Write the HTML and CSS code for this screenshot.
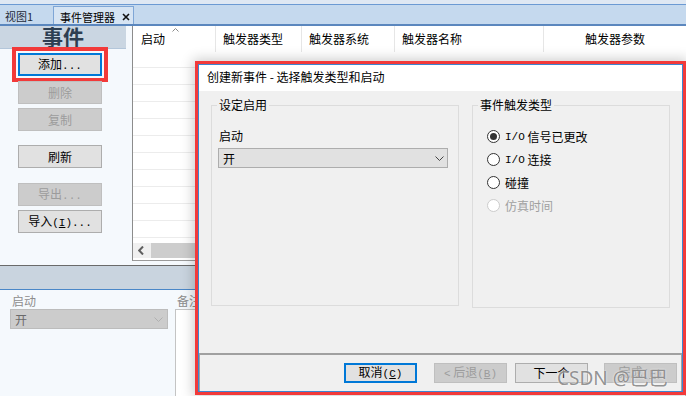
FILE: index.html
```html
<!DOCTYPE html>
<html lang="zh-CN">
<head>
  <meta charset="UTF-8">
  <title>事件管理器</title>
  <link rel="stylesheet" href="styles.css">
</head>
<body>
  <!-- Tab strip -->
  <div class="tabs">
    <div class="tab">视图1</div>
    <div class="tab active">事件管理器<svg class="tab-close" width="8" height="8" viewBox="0 0 8 8"><path d="M1 1L7 7M7 1L1 7" stroke="#111" stroke-width="1.6"/></svg></div>
  </div>

  <!-- Event list -->
  <div class="main">
    <div class="side">
      <div class="side-title">事件</div>
      <div class="side-btns">
        <button class="btn focus marked">添加<span class="m">...</span></button>
        <button class="btn" disabled>删除</button>
        <button class="btn" disabled>复制</button>
        <button class="btn refresh">刷新</button>
        <button class="btn export" disabled>导出<span class="m">...</span></button>
        <button class="btn">导入<span class="m">(<u>I</u>)...</span></button>
      </div>
    </div>
    <div class="grid">
      <div class="grid-head">
        <div class="col c1">启动<svg class="sort" width="7" height="4" viewBox="0 0 7 4"><path d="M0.5 3.5L3.5 0.5L6.5 3.5" fill="none" stroke="#8a8a8a"/></svg></div>
        <div class="col c2">触发器类型</div>
        <div class="col c3">触发器系统</div>
        <div class="col c4">触发器名称</div>
        <div class="col c5">触发器参数</div>
      </div>
      <div class="grid-body">
        <div class="row"></div><div class="row"></div><div class="row"></div><div class="row"></div>
        <div class="row"></div><div class="row"></div><div class="row"></div><div class="row"></div>
        <div class="row"></div><div class="row"></div><div class="row"></div><div class="row"></div>
      </div>
      <div class="hscroll">
        <div class="hs-btn"><svg width="6" height="9" viewBox="0 0 6 9"><path d="M5 0.5L1.2 4.5L5 8.5" fill="none" stroke="#606060" stroke-width="2"/></svg></div>
        <div class="hs-thumb"></div>
      </div>
    </div>
  </div>

  <!-- Properties -->
  <div class="props">
    <div class="props-band"></div>
    <div class="props-body">
      <div class="field start">
        <div class="lbl">启动</div>
        <div class="select off">开<svg width="9" height="5" viewBox="0 0 9 5"><path d="M0.5 0.5L4.5 4.5L8.5 0.5" fill="none" stroke="#b0b0b0"/></svg></div>
      </div>
      <div class="field memo-field">
        <div class="lbl">备注</div>
        <div class="memo"></div>
      </div>
    </div>
  </div>

  <!-- Wizard dialog (marked in red) -->
  <div class="dlg-mark">
    <div class="dlg">
      <div class="dlg-title">创建新事件 - 选择触发类型和启动</div>
      <div class="dlg-body">
        <fieldset class="group g1">
          <legend>设定启用</legend>
          <div class="g-lbl">启动</div>
          <div class="select">开<svg width="9" height="5" viewBox="0 0 9 5"><path d="M0.5 0.5L4.5 4.5L8.5 0.5" fill="none" stroke="#444"/></svg></div>
        </fieldset>
        <fieldset class="group g2">
          <legend>事件触发类型</legend>
          <div class="radios">
            <div class="radio-row"><span class="radio on"></span><span class="m">I/O</span>&nbsp;信号已更改</div>
            <div class="radio-row"><span class="radio"></span><span class="m">I/O</span>&nbsp;连接</div>
            <div class="radio-row"><span class="radio"></span>碰撞</div>
            <div class="radio-row disabled"><span class="radio"></span>仿真时间</div>
          </div>
        </fieldset>
      </div>
      <div class="dlg-foot">
        <button class="btn dbtn focus cancel">取消<span class="m">(<u>C</u>)</span></button>
        <button class="btn dbtn back" disabled><span class="m">&lt;</span> 后退<span class="m">(<u>B</u>)</span></button>
        <button class="btn dbtn next">下一个</button>
        <button class="btn dbtn" disabled>完成<span class="m">(<u>F</u>)</span></button>
      </div>
    </div>
  </div>

  <div class="watermark">CSDN @巴巴</div>
</body>
</html>
```

FILE: styles.css
```css
body { margin: 0; width: 686px; height: 396px; overflow: hidden; position: relative; font: 12px "Noto Sans CJK SC", sans-serif; color: #000; background: #f5f9fd; }
.m { font-family: "Liberation Mono", monospace; font-size: 11px; }

/* tabs */
.tabs { height: 26px; box-sizing: border-box; padding-top: 6px; display: flex; font-size: 11px; background: linear-gradient(#dfe8f3 0 4px, #6c9ad3 4px 5px, #c5d9ee 5px); border-bottom: 2px solid #5b87be; }
.tab { width: 53px; box-sizing: border-box; padding: 3px 0 0 5px; line-height: 14px; color: #1e2a38; white-space: nowrap; }
.tab.active { width: auto; display: flex; align-items: flex-start; padding: 3px 3px 0 6px; background: #d6e4f3; border: 1px solid #7fa6d6; border-bottom: none; color: #000; }
.tab-close { margin: 3px 0 0 7px; }

/* main area */
.main { display: flex; height: 240px; box-sizing: border-box; border-bottom: 1px solid #6a6a6a; }
.side { width: 132px; flex: none; }
.side-title { height: 22px; margin-right: 6px; line-height: 20px; text-align: center; font-size: 21px; font-weight: bold; color: #2e3f52; background: #cad6e2; border-bottom: 1px solid #b3c6da; }
.side-btns { display: flex; flex-direction: column; gap: 4px; padding: 4px 0 0 18px; }
.btn { font: inherit; width: 84px; height: 23px; padding: 0; background: #e1e1e1; border: 1px solid #adadad; color: #000; line-height: 18px; }
.btn:disabled { background: #cccccc; border-color: #bfbfbf; color: #9c9c9c; }
.btn.focus { border: 2px solid #0078d7; }
.btn.marked { outline: 4px solid #f23a3a; outline-offset: 2px; margin-bottom: 1px; }
.btn.refresh { margin-top: 10px; }
.btn.export { margin-top: 11px; }

/* grid */
.grid { flex: 1; min-width: 0; display: flex; flex-direction: column; background: #fff; border-left: 1px solid #8c8c8c; border-bottom: 1px solid #9a9a9a; margin-bottom: 4px; }
.grid-head { height: 25px; flex: none; display: flex; }
.col { position: relative; box-sizing: border-box; padding: 5px 0 0 7px; line-height: 16px; white-space: nowrap; border-right: 1px solid #e6e6e6; height: 26px; }
.c1 { width: 83px; padding-left: 8px; }
.c2 { width: 86px; }
.c3 { width: 93px; }
.c4 { width: 149px; }
.c5 { flex: 1; border-right: none; text-align: center; padding-left: 0; }
.sort { position: absolute; left: 39px; top: 2px; }
.grid-body { flex: 1; overflow: hidden; }
.row { height: 17px; box-sizing: border-box; border-bottom: 1px solid #ececec; }
.hscroll { height: 15px; margin-bottom: 2px; flex: none; display: flex; background: #f0f0f0; }
.hs-btn { width: 18px; display: flex; align-items: center; justify-content: center; padding-right: 2px; box-sizing: border-box; }
.hs-thumb { flex: 1; background: #cdcdcd; }

/* properties */
.props { height: 130px; }
.props-band { height: 23px; background: #c9d4df; border-bottom: 1px solid #4a87c8; }
.props-body { display: flex; gap: 7px; padding: 2px 0 0 10px; }
.lbl { line-height: 17px; color: #8d8d8d; padding-left: 2px; }
.field.start { width: 158px; }
.select { height: 20px; box-sizing: border-box; display: flex; align-items: center; justify-content: space-between; padding: 0 4px 0 4px; background: #e1e1e1; border: 1px solid #adadad; }
.select.off { background: #cccccc; border-color: #bcbcbc; color: #6a6a6a; }
.memo-field { flex: 1; }
.memo { height: 90px; background: #fff; border: 1px solid #c4c4c4; }

/* dialog */
.dlg-mark { position: absolute; left: 195px; top: 61px; width: 491px; height: 334px; box-sizing: border-box; border: 3px solid #f23a3a; box-shadow: 0 0 12px 2px rgba(0,0,0,0.2); }
.dlg { height: 100%; box-sizing: border-box; display: flex; flex-direction: column; background: #f0f0f0; border: 1px solid #3d85d0; }
.dlg-title { height: 26px; flex: none; background: #fff; padding-left: 8px; line-height: 24px; }
.dlg-body { flex: 1; display: grid; grid-template-columns: 248px 198px; column-gap: 13px; align-items: start; padding: 6px 11px 0 12px; }
.group { margin: 0; padding: 0; min-width: 0; border: 1px solid #dcdcdc; box-sizing: border-box; }
.group legend { padding: 0 2px; margin-left: 5px; line-height: 16px; }
.g1 { height: 209px; }
.g2 { height: 211px; }
.g-lbl { margin: 15px 0 0 7px; line-height: 16px; }
.g1 .select { margin: 4px 10px 0 6px; padding-right: 3px; }
.radios { margin: 12px 0 0 14px; }
.radio-row { display: flex; align-items: center; height: 23px; }
.radio { width: 13px; height: 13px; box-sizing: border-box; border: 1px solid #333; border-radius: 50%; background: #fff; margin-right: 5px; display: flex; align-items: center; justify-content: center; }
.radio.on::after { content: ""; width: 7px; height: 7px; border-radius: 50%; background: #333; }
.radio-row.disabled { color: #a0a0a0; }
.radio-row.disabled .radio { border-color: #cccccc; }
.dlg-foot { height: 38px; flex: none; box-sizing: border-box; display: flex; justify-content: flex-end; align-items: flex-start; padding: 8px 4px 0 0; border-top: 2px solid #a0a0a0; border-left: 1px solid #a0a0a0; border-right: 1px solid #a0a0a0; }
.dbtn { width: 73px; height: 20px; line-height: 14px; }
.cancel { margin-right: 17px; }
.back { margin-right: 8px; }
.next { margin-right: 16px; }

.watermark { position: absolute; left: 557px; top: 363px; font: 19px "Noto Sans", "Noto Sans CJK SC", sans-serif; color: rgba(120,120,120,0.8); text-shadow: 0 0 2px #fff; white-space: nowrap; }
```
